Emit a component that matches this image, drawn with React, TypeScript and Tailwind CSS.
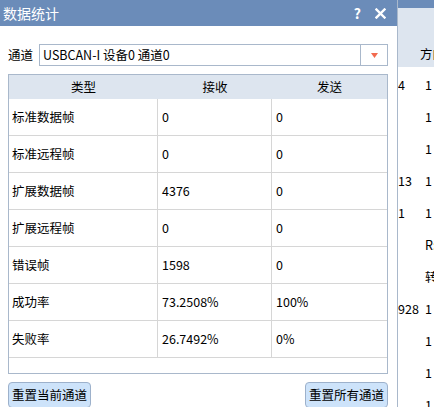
import React from 'react';

const rows: [string, string, string][] = [
  ['标准数据帧', '0', '0'],
  ['标准远程帧', '0', '0'],
  ['扩展数据帧', '4376', '0'],
  ['扩展远程帧', '0', '0'],
  ['错误帧', '1598', '0'],
  ['成功率', '73.2508%', '100%'],
  ['失败率', '26.7492%', '0%'],
];

const sideRows: [string, string][] = [
  ['4', '1'],
  ['', '1'],
  ['', '1'],
  ['13', '1'],
  ['1', '1'],
  ['', 'R:'],
  ['', '转'],
  ['928', '1'],
  ['', '1'],
  ['', '1'],
  ['', '1'],
];

export default function App() {
  return (
    <div
      className="flex w-[434px] h-[407px] overflow-hidden bg-white text-[12.5px] text-black"
      style={{ fontFamily: '"Noto Sans CJK SC", "Noto Sans", sans-serif' }}
    >
      {/* Dialog */}
      <div className="w-[397px] shrink-0 flex flex-col">
        {/* Title bar */}
        <div className="h-[26px] shrink-0 bg-[#6b8cb9] flex items-center pl-[3px] pr-[11px] text-white">
          <span className="text-[14px] leading-none">数据统计</span>
          <span className="ml-auto text-[14px] font-bold leading-none">?</span>
          <svg className="ml-[14px]" width="11" height="11" viewBox="0 0 11 11">
            <path d="M1.5 1.5 L9.5 9.5 M9.5 1.5 L1.5 9.5" stroke="white" strokeWidth="2.4" strokeLinecap="square" />
          </svg>
        </div>

        {/* Body */}
        <div className="flex flex-col pl-[8px] pr-[9px] pt-[18px]">
          {/* Channel select */}
          <div className="flex items-center h-[22px] shrink-0">
            <span className="w-[31px] leading-none">通道</span>
            <div className="flex-1 h-full flex border border-[#a9b8cb]">
              <span className="flex-1 flex items-center pl-[3px] leading-none">USBCAN-I 设备0 通道0</span>
              <div className="w-[27px] border-l border-[#a9b8cb] flex items-center justify-center">
                <svg width="7" height="5" viewBox="0 0 7 5">
                  <path d="M0 0 H7 L3.5 5 Z" fill="#f26a4f" />
                </svg>
              </div>
            </div>
          </div>

          {/* Table */}
          <div className="mt-[8px] h-[300px] shrink-0 border border-[#a9b8cb] flex flex-col">
            <div className="h-[24px] shrink-0 grid grid-cols-[149px_114px_1fr] bg-[#dde5ef]">
              <div className="flex items-center justify-center">类型</div>
              <div className="flex items-center justify-center">接收</div>
              <div className="flex items-center justify-center">发送</div>
            </div>
            {rows.map(([name, rx, tx]) => (
              <div key={name} className="h-[37px] shrink-0 grid grid-cols-[149px_114px_1fr] border-b border-[#d6d6d6]">
                <div className="flex items-center pl-[3px] border-r border-[#d6d6d6]">{name}</div>
                <div className="flex items-center pl-[4px] border-r border-[#d6d6d6]">{rx}</div>
                <div className="flex items-center pl-[4px]">{tx}</div>
              </div>
            ))}
          </div>

          {/* Buttons */}
          <div className="mt-[8px] flex justify-between shrink-0">
            <button className="h-[26px] px-[3px] rounded-[4px] bg-[#cde3fa] border border-[#9db1cb] leading-none">
              重置当前通道
            </button>
            <button className="h-[26px] px-[3px] rounded-[4px] bg-[#cde3fa] border border-[#9db1cb] leading-none">
              重置所有通道
            </button>
          </div>
        </div>
      </div>

      {/* Separator */}
      <div className="w-px shrink-0 bg-[#a9b8cb]" />

      {/* Background pane */}
      <div className="flex-1 flex flex-col min-w-0 overflow-hidden">
        <div className="h-[8px] shrink-0 bg-[#6b8cb9]" />
        <div className="h-[59px] shrink-0 bg-[#dde5ef] pt-[40px] pl-[22px] leading-none whitespace-nowrap">方向</div>
        <div className="pt-[2px] shrink-0">
          {sideRows.map(([a, b], i) => (
            <div key={i} className="h-[32px] flex items-center whitespace-nowrap">
              <span className="w-[27px] shrink-0">{a}</span>
              <span>{b}</span>
            </div>
          ))}
        </div>
      </div>
    </div>
  );
}
